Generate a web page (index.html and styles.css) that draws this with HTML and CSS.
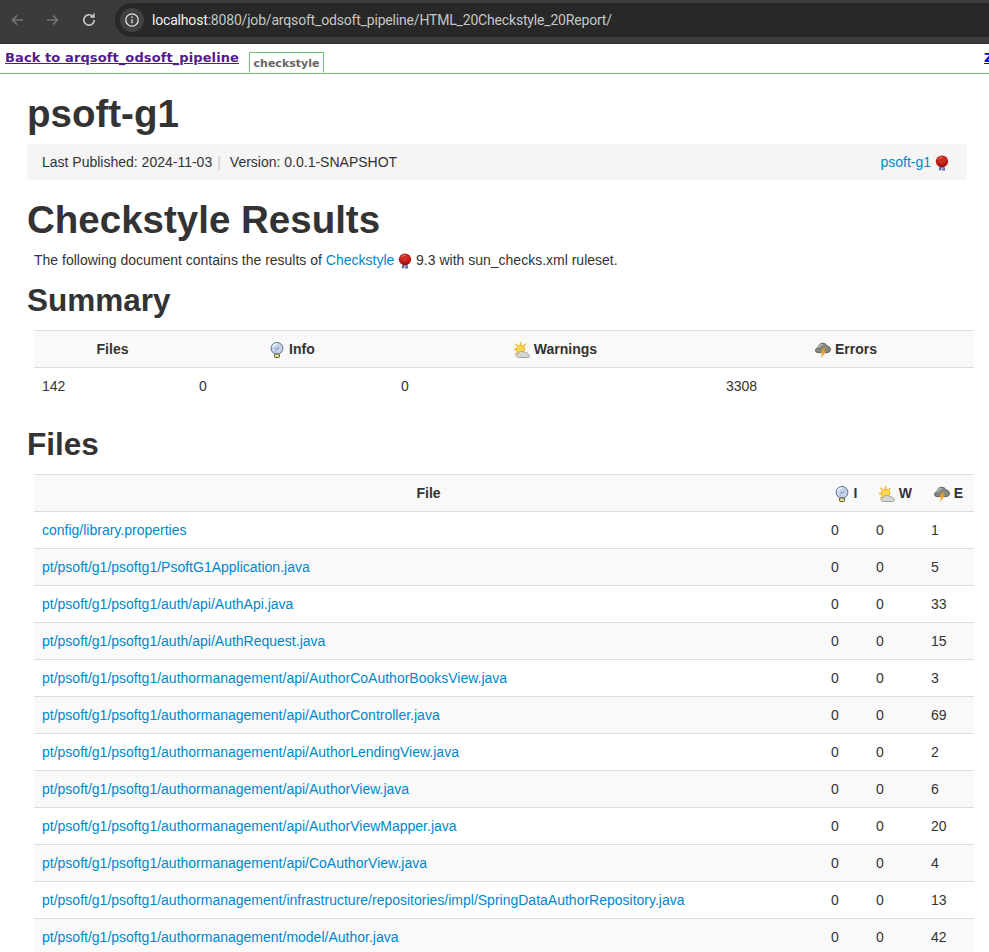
FILE: index.html
```html
<!DOCTYPE html>
<html lang="en">
<head>
<meta charset="utf-8">
<title>Checkstyle Results</title>
<link rel="stylesheet" href="styles.css">
</head>
<body>
<svg class="defs" width="0" height="0" aria-hidden="true">
  <symbol id="i-rib" viewBox="0 0 14 16">
    <path d="M4.500 10.500 3.800 15.800l2.700-1.400 1.300 1.400 2.400-.6-.8-4.700z" fill="#5564a8"/>
    <path d="M6 12.500h2.500v2H6z" fill="#a9b2d8"/>
    <ellipse cx="7" cy="6.300" rx="6.200" ry="5.900" fill="#b91d18"/>
    <path d="M2.500 3.500C4 1.500 7 1 9.500 2c1 .6 1.800 1.700 2 2.800L7 9 3 7z" fill="#cf2c23"/>
    <path d="M3.200 4.200C4.300 2.700 6 2.200 7.500 2.400" stroke="#e88c80" stroke-width="1" fill="none"/>
    <path d="M3.500 10c2.300 1.500 5.200 1.300 7.200-.6" stroke="#8d120e" stroke-width="1.200" fill="none"/>
  </symbol>
  <symbol id="i-info" viewBox="0 0 13 16">
    <circle cx="6.500" cy="6.400" r="5.900" fill="#c5d3ec" stroke="#5f6f8d"/>
    <path d="M2.400 5C3 3 4.800 1.800 6.700 1.900" stroke="#f2f6fd" stroke-width="1.400" fill="none"/>
    <path d="M5 9.500l3.500-5M4.500 6.500h4" stroke="#8ea2c6" stroke-width=".9" fill="none"/>
    <rect x="4" y="12" width="5" height="3.500" rx=".8" fill="#e6dc94" stroke="#5a573a"/>
  </symbol>
  <symbol id="i-warn" viewBox="0 0 17 17">
    <g stroke="#f6b030" stroke-width="1.400"><path d="M7 0v3M1.500 1.800l2.300 2.300M12.500 1.800l-2.300 2.300M0 8h3M1.500 13l2.200-1.800"/></g>
    <circle cx="7" cy="7.700" r="4.400" fill="#fbd84e" stroke="#f0a526"/>
    <path d="M5 16.500c-1.800 0-2.800-.9-2.800-2.100s1-2.100 2.200-2.100c.6-1.600 2-2.500 3.700-2.500 1.500 0 2.800.7 3.400 1.900 .6-.3 1.400-.4 2-.2 1.100.3 1.900 1.200 2 2.300 .6.200 1 .6 1 1.100 0 .9-.7 1.600-1.700 1.600z" fill="#d5d7d1" stroke="#96988f" stroke-width=".9"/>
  </symbol>
  <symbol id="i-err" viewBox="0 0 17 16">
    <path d="M3.300 10.800C1.500 10.800.5 9.700.5 8.300s1.100-2.500 2.500-2.500C3.500 3 5.500 .8 8.300 .8c2 0 3.700 1.100 4.400 2.800 2.200.2 3.800 2 3.800 3.800 0 1.900-1.500 3.400-3.300 3.400z" fill="#85877f" stroke="#55574f" stroke-width=".9"/>
    <path d="M3.500 5.500C4.500 3.400 6.300 2.200 8.300 2.300" stroke="#c4c6bf" stroke-width="1.200" fill="none"/>
    <path d="M9 6.500 6 11h2.200L6.600 15.900l5-6.200H9.300L11 6.500z" fill="#f7a822" stroke="#d9881a" stroke-width=".4"/>
  </symbol>
</svg>

<div class="browser">
  <svg class="nav" viewBox="0 0 16 16"><path d="M14 8H3.500M8 3.500 3.500 8 8 12.500" class="nav-off"/></svg>
  <svg class="nav" viewBox="0 0 16 16"><path d="M2 8h10.500M8 3.500 12.500 8 8 12.500" class="nav-off"/></svg>
  <svg class="nav" viewBox="0 0 16 16"><path d="M13.200 8a5.200 5.200 0 1 1-1.600-3.800M12.800 1.600v3.300H9.500" class="nav-on"/></svg>
  <div class="omnibox">
    <span class="site-chip"><svg class="site-icon" viewBox="0 0 16 16"><circle cx="8" cy="8" r="6.200"/><path d="M8 7.200v4M8 4.600v1.300"/></svg></span>
    <span class="url"><b>localhost</b>:8080/job/arqsoft_odsoft_pipeline/HTML_20Checkstyle_20Report/</span>
  </div>
</div>

<div class="jenkins">
  <a class="back" href="#">Back to arqsoft_odsoft_pipeline</a>
  <span class="tab">checkstyle</span>
  <a class="zip" href="#">Zip</a>
</div>

<main class="page">
  <h1 class="title">psoft-g1</h1>
  <div class="breadcrumb">
    <span>Last Published: 2024-11-03<span class="sep">|</span>Version: 0.0.1-SNAPSHOT</span>
    <span><a href="#">psoft-g1</a> <svg class="ico rib"><use href="#i-rib"/></svg></span>
  </div>

  <h1 class="results">Checkstyle Results</h1>
  <p class="intro">The following document contains the results of <a href="#">Checkstyle</a> <svg class="ico rib"><use href="#i-rib"/></svg> 9.3 with sun_checks.xml ruleset.</p>

  <h2>Summary</h2>
  <table class="summary">
    <thead><tr>
      <th>Files</th>
      <th><svg class="ico"><use href="#i-info"/></svg> Info</th>
      <th><svg class="ico"><use href="#i-warn"/></svg> Warnings</th>
      <th><svg class="ico"><use href="#i-err"/></svg> Errors</th>
    </tr></thead>
    <tbody><tr><td>142</td><td>0</td><td>0</td><td>3308</td></tr></tbody>
  </table>

  <h2 class="files-h">Files</h2>
  <table class="files">
    <thead><tr>
      <th>File</th>
      <th><svg class="ico"><use href="#i-info"/></svg> I</th>
      <th><svg class="ico"><use href="#i-warn"/></svg> W</th>
      <th><svg class="ico"><use href="#i-err"/></svg> E</th>
    </tr></thead>
    <tbody>
      <tr><td><a href="#">config/library.properties</a></td><td>0</td><td>0</td><td>1</td></tr>
      <tr><td><a href="#">pt/psoft/g1/psoftg1/PsoftG1Application.java</a></td><td>0</td><td>0</td><td>5</td></tr>
      <tr><td><a href="#">pt/psoft/g1/psoftg1/auth/api/AuthApi.java</a></td><td>0</td><td>0</td><td>33</td></tr>
      <tr><td><a href="#">pt/psoft/g1/psoftg1/auth/api/AuthRequest.java</a></td><td>0</td><td>0</td><td>15</td></tr>
      <tr><td><a href="#">pt/psoft/g1/psoftg1/authormanagement/api/AuthorCoAuthorBooksView.java</a></td><td>0</td><td>0</td><td>3</td></tr>
      <tr><td><a href="#">pt/psoft/g1/psoftg1/authormanagement/api/AuthorController.java</a></td><td>0</td><td>0</td><td>69</td></tr>
      <tr><td><a href="#">pt/psoft/g1/psoftg1/authormanagement/api/AuthorLendingView.java</a></td><td>0</td><td>0</td><td>2</td></tr>
      <tr><td><a href="#">pt/psoft/g1/psoftg1/authormanagement/api/AuthorView.java</a></td><td>0</td><td>0</td><td>6</td></tr>
      <tr><td><a href="#">pt/psoft/g1/psoftg1/authormanagement/api/AuthorViewMapper.java</a></td><td>0</td><td>0</td><td>20</td></tr>
      <tr><td><a href="#">pt/psoft/g1/psoftg1/authormanagement/api/CoAuthorView.java</a></td><td>0</td><td>0</td><td>4</td></tr>
      <tr><td><a href="#">pt/psoft/g1/psoftg1/authormanagement/infrastructure/repositories/impl/SpringDataAuthorRepository.java</a></td><td>0</td><td>0</td><td>13</td></tr>
      <tr><td><a href="#">pt/psoft/g1/psoftg1/authormanagement/model/Author.java</a></td><td>0</td><td>0</td><td>42</td></tr>
    </tbody>
  </table>
</main>
</body>
</html>
```
FILE: styles.css
```css
html, body { margin: 0; padding: 0; height: 952px; overflow: hidden; background: #fff; }
body { font: 14px/20px "Liberation Sans", Arial, sans-serif; color: #333; }
.defs { position: absolute; }
a { color: #0088cc; text-decoration: none; }

.browser { height: 44px; background: #3b3b3b; border-bottom: 1px solid #333; display: flex; align-items: flex-start; padding: 3px 0 0 9px; box-sizing: border-box; }
.nav { width: 16px; height: 16px; margin: 9px 20px 0 0; flex: none; }
.nav path { fill: none; stroke-width: 1.700; }
.nav-off { stroke: #757575; }
.nav-on { stroke: #c7c7c7; }
.omnibox { flex: 1; height: 34px; margin-left: -2px; background: #282828; border-radius: 17px 0 0 17px; display: flex; align-items: center; padding-left: 5px; }
.site-chip { width: 24px; height: 24px; border-radius: 12px; background: #424242; display: flex; align-items: center; justify-content: center; }
.site-icon { width: 16px; height: 16px; }
.site-icon circle, .site-icon path { fill: none; stroke: #e3e3e3; stroke-width: 1.300; }
.url { margin-left: 8px; font: 14px/20px Roboto, "Liberation Sans", sans-serif; letter-spacing: -.18px; color: #c4c7c5; white-space: nowrap; }
.url b { font-weight: 400; color: #f1f1f1; }

.jenkins { position: relative; height: 30px; box-sizing: border-box; border-bottom: 1px solid #72c472; background: #fff; font-family: "DejaVu Sans", sans-serif; }
.back { position: absolute; left: 5px; top: 6px; font: bold 13px/16px "DejaVu Sans", sans-serif; letter-spacing: .1px; color: #551a8b; text-decoration: underline; white-space: nowrap; }
.tab { position: absolute; left: 249px; top: 8px; width: 75px; height: 21px; box-sizing: border-box; border: 1px solid #72c472; border-bottom: 1px solid #fff; background: #fff; font: bold 11px/22px "DejaVu Sans", sans-serif; color: #666; text-align: center; }
.zip { position: absolute; left: 984px; top: 6px; font: bold 13px/16px "DejaVu Sans", sans-serif; color: #0000ee; text-decoration: underline; }

.page { padding: 0 22px 0 27px; }
.title { margin: 20px 0 0; font-size: 38.500px; line-height: 40px; font-weight: bold; }
.breadcrumb { margin-top: 10px; height: 36px; box-sizing: border-box; padding: 0 18px 0 15px; background: #f5f5f5; border-radius: 4px; display: flex; justify-content: space-between; align-items: center; }
.sep { color: #ccc; padding: 0 9px 0 5px; }
.results { margin: 20px 0 0; font-size: 38.500px; line-height: 40px; font-weight: bold; }
.intro { margin: 0 0 0 7px; padding-top: 10px; line-height: 20px; }
h2 { margin: 10px 0 0; font-size: 31.500px; line-height: 40px; font-weight: bold; }
.files-h { margin-top: 19px; }
.ico { width: 16px; height: 16px; vertical-align: -4px; }
.rib { width: 14px; height: 16px; }

table { margin: 10px 0 0 7px; width: 940px; table-layout: fixed; border-collapse: collapse; }
th, td { height: 37px; box-sizing: border-box; padding: 8px; text-align: left; border-top: 1px solid #ddd; line-height: 20px; white-space: nowrap; }
th { text-align: center; background: #f9f9f9; font-weight: bold; }
.summary th { text-align: center; }
.summary th:nth-child(1) { width: 157px; }
.summary th:nth-child(2) { width: 202px; }
.summary th:nth-child(3) { width: 325px; }
.files th:nth-child(2) { width: 45px; }
.files th:nth-child(3) { width: 55px; }
.files th:nth-child(4) { width: 51px; }
.files tbody tr:nth-child(even) td { background: #f9f9f9; }
```
